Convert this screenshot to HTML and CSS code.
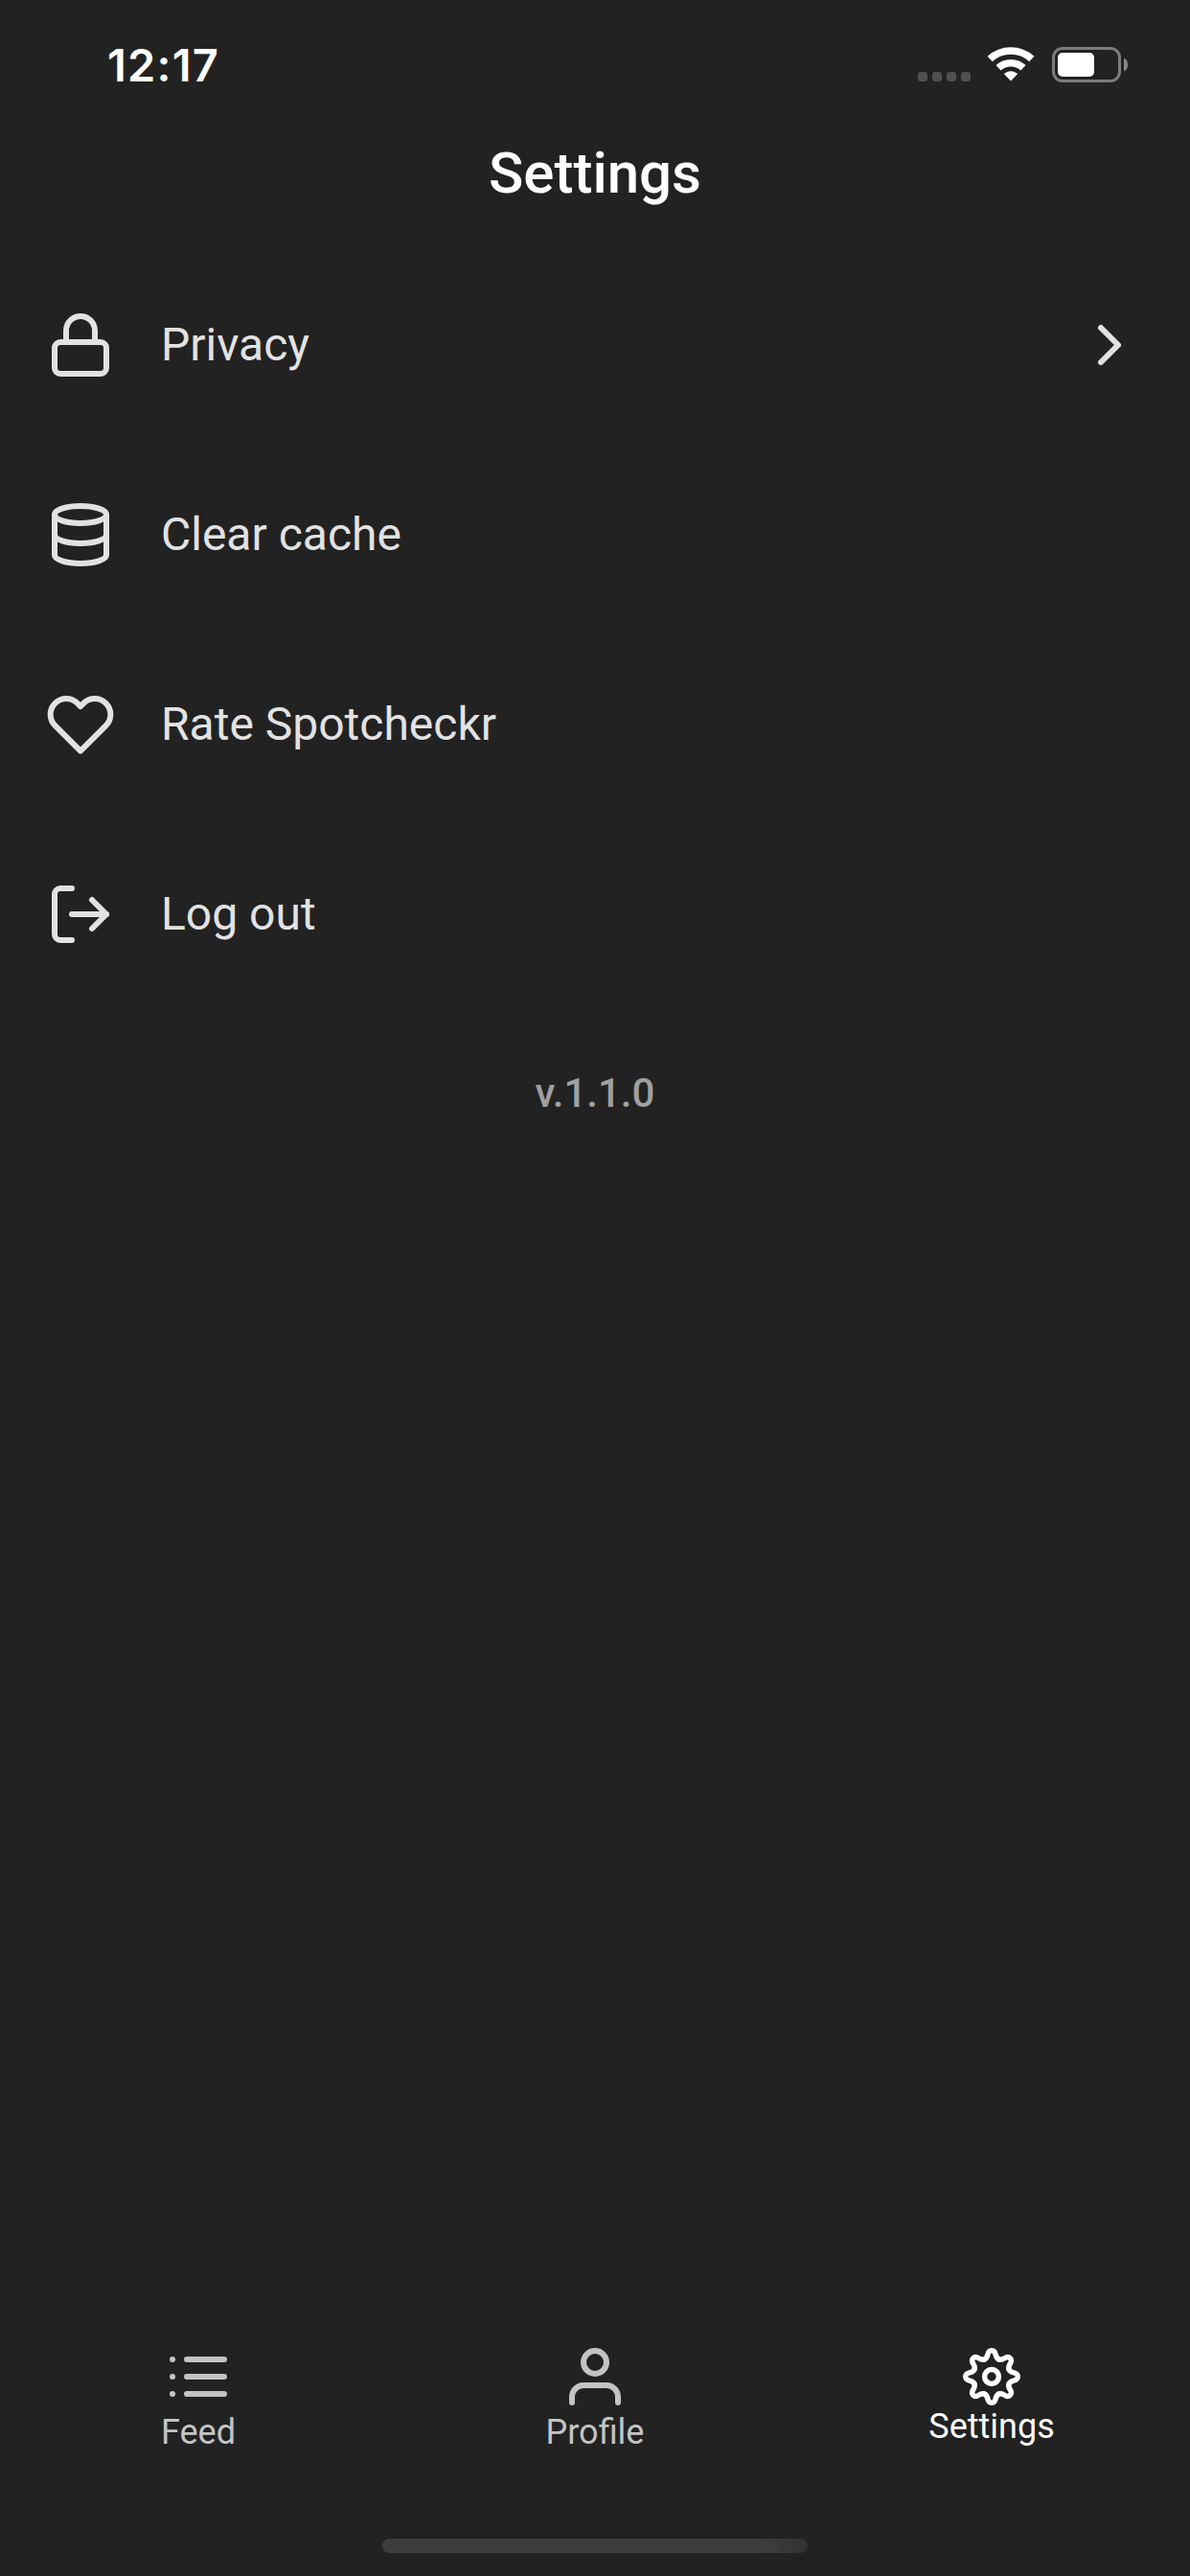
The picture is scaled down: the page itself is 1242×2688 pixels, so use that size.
FILE: index.html
```html
<!DOCTYPE html>
<html lang="en">
<head>
<meta charset="utf-8">
<title>Settings</title>
<link rel="stylesheet" href="styles.css">
</head>
<body>
<div class="screen">
  <div class="status-bar">
    <span class="time">12:17</span>
    <div class="indicators">
      <div class="signal"><i></i><i></i><i></i><i></i></div>
      <svg class="wifi" width="50" height="38" viewBox="0 0 50 38">
        <path d="M3.2 13.5A32.2 32.2 0 0 1 46.8 13.5" stroke-width="7.6"/>
        <path d="M12 22.8A19.2 19.2 0 0 1 38 22.8" stroke-width="7.5"/>
        <path class="solid" d="M25 36.6L18.2 29.6Q18 29 18.6 28.6Q25 23.8 31.4 28.6Q32 29 31.8 29.6Z"/>
      </svg>
      <div class="battery"><div class="level"></div></div>
      <div class="battery-tip"></div>
    </div>
  </div>

  <header class="header"><h1>Settings</h1></header>

  <main class="list">
    <div class="row">
      <svg class="icon" viewBox="0 0 24 24"><rect x="3" y="11" width="18" height="11" rx="2"/><path d="M7 11V7a5 5 0 0 1 10 0v4"/></svg>
      <span class="label">Privacy</span>
      <svg class="icon" viewBox="0 0 24 24"><path d="M9 18l6-6-6-6"/></svg>
    </div>
    <div class="row">
      <svg class="icon" viewBox="0 0 24 24"><ellipse cx="12" cy="5" rx="9" ry="3"/><path d="M21 12c0 1.660-4 3-9 3s-9-1.340-9-3"/><path d="M3 5v14c0 1.660 4 3 9 3s9-1.340 9-3V5"/></svg>
      <span class="label">Clear cache</span>
    </div>
    <div class="row">
      <svg class="icon" viewBox="0 0 24 24"><path d="M20.840 4.610a5.500 5.500 0 0 0-7.780 0L12 5.670l-1.060-1.060a5.500 5.500 0 0 0-7.780 7.780l1.060 1.060L12 21.230l7.780-7.780 1.060-1.060a5.500 5.500 0 0 0 0-7.780z"/></svg>
      <span class="label">Rate Spotcheckr</span>
    </div>
    <div class="row">
      <svg class="icon" viewBox="0 0 24 24"><path d="M9 21H5a2 2 0 0 1-2-2V5a2 2 0 0 1 2-2h4"/><path d="M16 17l5-5-5-5"/><path d="M21 12H9"/></svg>
      <span class="label">Log out</span>
    </div>
    <p class="version">v.1.1.0</p>
  </main>

  <nav class="tabs">
    <div class="tab">
      <svg class="icon" viewBox="0 0 24 24"><path d="M8 6h13M8 12h13M8 18h13M3 6h.01M3 12h.01M3 18h.01"/></svg>
      <span>Feed</span>
    </div>
    <div class="tab">
      <svg class="icon" viewBox="0 0 24 24"><path d="M20 21v-2a4 4 0 0 0-4-4H8a4 4 0 0 0-4 4v2"/><circle cx="12" cy="7" r="4"/></svg>
      <span>Profile</span>
    </div>
    <div class="tab active">
      <svg class="icon gear" viewBox="-36 -36 72 72">
        <defs><path id="tooth" d="M-7.500-18.100C-2.200-20.300-6-27.200 0-27.200S2.200-20.300 7.500-18.100"/></defs>
        <use href="#tooth"/>
        <use href="#tooth" transform="rotate(45)"/>
        <use href="#tooth" transform="rotate(90)"/>
        <use href="#tooth" transform="rotate(135)"/>
        <use href="#tooth" transform="rotate(180)"/>
        <use href="#tooth" transform="rotate(225)"/>
        <use href="#tooth" transform="rotate(270)"/>
        <use href="#tooth" transform="rotate(315)"/>
        <circle r="7.400"/>
      </svg>
      <span>Settings</span>
    </div>
  </nav>
  <div class="home-area"><div class="home-indicator"></div></div>
</div>
</body>
</html>
```
FILE: styles.css
```css
* { box-sizing: border-box; }

body {
  margin: 0;
  background: #222222;
  color: #e2e2e2;
  font-family: Roboto, "Liberation Sans", sans-serif;
}

.screen {
  display: flex;
  flex-direction: column;
  width: 1242px;
  height: 2688px;
}

.status-bar {
  display: flex;
  justify-content: space-between;
  height: 132px;
  padding: 0 65px 0 112px;
}

.time {
  padding-top: 40px;
  color: #fff;
  font: 600 47px/56px Inter, sans-serif;
  letter-spacing: 1.2px;
}

.indicators {
  display: flex;
  align-items: flex-start;
}

.signal {
  display: flex;
  gap: 5px;
  padding-top: 75px;
  margin-right: 17px;
}

.signal i {
  width: 10px;
  height: 10px;
  border-radius: 3px;
  background: #505050;
}

.wifi {
  margin: 48px 18px 0 0;
  fill: none;
  stroke: #fff;
}

.wifi .solid {
  fill: #fff;
  stroke: none;
}

.battery {
  width: 72px;
  height: 37px;
  margin-top: 49px;
  padding: 3px;
  border: 3px solid #7c7c7c;
  border-radius: 11px;
}

.level {
  width: 38px;
  height: 25px;
  border-radius: 5px;
  background: #fff;
}

.battery-tip {
  width: 4px;
  height: 13px;
  margin: 61px 0 0 3px;
  border-radius: 0 4px 4px 0 / 0 7px 7px 0;
  background: #8a8a8a;
}

.header {
  height: 129px;
  padding-top: 14px;
  text-align: center;
}

.header h1 {
  margin: 0;
  color: #fff;
  font-size: 60px;
  font-weight: 500;
  line-height: 70px;
}

.list { flex: 1; }

.row {
  display: flex;
  align-items: center;
  gap: 48px;
  height: 198px;
  padding: 0 48px;
}

.icon {
  display: block;
  flex: none;
  width: 72px;
  height: 72px;
  fill: none;
  stroke: currentColor;
  stroke-width: 2;
  stroke-linecap: round;
  stroke-linejoin: round;
}

.label {
  flex: 1;
  font-size: 48px;
  line-height: 56px;
}

.version {
  margin: 63px 0 0;
  color: #a0a0a0;
  font-size: 42px;
  font-weight: 500;
  line-height: 50px;
  text-align: center;
}

.tabs {
  display: flex;
  height: 174px;
  padding-top: 18px;
  color: #c4c4c4;
  font-size: 36px;
  line-height: 42px;
}

.tab {
  display: flex;
  flex: 1;
  flex-direction: column;
  align-items: center;
}

.tab span { margin-top: 1px; }
.tab.active { color: #fff; }
.tab.active span { margin-top: -5px; }
.gear { stroke-width: 5.500; }

.home-area {
  display: flex;
  justify-content: center;
  height: 88px;
  padding-top: 49px;
}

.home-indicator {
  width: 444px;
  height: 15px;
  border-radius: 8px;
  background: linear-gradient(90deg, #3d3d3d 0 90%, #323232 100%);
}
```
